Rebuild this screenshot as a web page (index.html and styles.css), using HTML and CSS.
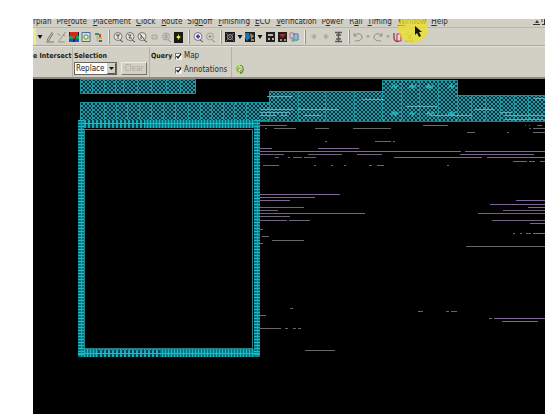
FILE: index.html
```html
<!DOCTYPE html>
<html lang="en">
<head>
<meta charset="utf-8">
<title>Layout Window</title>
<link rel="stylesheet" href="styles.css">
</head>
<body>
<main class="app">
  <header class="chrome">
    <nav class="menubar">
      <a href="#">rplan</a>
      <a href="#">Pre<u>r</u>oute</a>
      <a href="#"><u>P</u>lacement</a>
      <a href="#"><u>C</u>lock</a>
      <a href="#"><u>R</u>oute</a>
      <a href="#">Sig<u>n</u>off</a>
      <a href="#"><u>F</u>inishing</a>
      <a href="#"><u>E</u>CO</a>
      <a href="#"><u>V</u>erification</a>
      <a href="#">P<u>o</u>wer</a>
      <a href="#">R<u>a</u>il</a>
      <a href="#"><u>T</u>iming</a>
      <a href="#"><u>W</u>indow</a>
      <a href="#"><u>H</u>elp</a>
      <svg class="winctl" viewBox="0 0 12 9"><path d="M0 6.500h7M9 6.500h3M11.500 0v6" stroke="#333" fill="none"/><path d="M2 5l2-3 2 3z" fill="#333"/><path d="M9 1v3" stroke="#555"/></svg>
    </nav>
    <div class="toolbar">
      <button class="caret" aria-label="Mode menu"><svg viewBox="0 0 8 12"><path d="M1.500 4h5L4 8z" fill="#111"/></svg></button>
      <button aria-label="Draw"><svg viewBox="0 0 12 12"><path d="M3 9L8 1.500l1 1L4.500 10zM2 11h8" fill="none" stroke="#77766f"/></svg></button>
      <button aria-label="Edit"><svg viewBox="0 0 12 12"><path d="M1.500 2.500l3 2M9.500 1L3 10M2 11h7M7 4l2 1" fill="none" stroke="#96948a"/></svg></button>
      <button aria-label="Layers"><svg viewBox="0 0 12 12"><path d="M1 1h10v10H1z" fill="#222b36"/><path d="M2 1h8v4H2z" fill="#d5261e"/><path d="M1 5h4v3H1zM8 5h3v3H8z" fill="#16a05a"/><path d="M1 8h4v3H1zM7 8h4v3H7z" fill="#1752c9"/><path d="M4 5l2 4 2-4z" fill="#e8332a"/></svg></button>
      <button aria-label="Fit view"><svg viewBox="0 0 12 12"><path d="M2 1.500h8v9H2z" fill="#d5e5bd" stroke="#4969ac"/><circle cx="6" cy="6" r="2.200" fill="#edf6aa" stroke="#51885e"/></svg></button>
      <button aria-label="Hierarchy"><svg viewBox="0 0 12 12"><path d="M3 2h4v2H3z" fill="#26966a"/><path d="M7 3h2v3H7z" fill="#d43d36"/><path d="M6 6h4v2H6z" fill="#c7b62d"/><path d="M7 9h3v2H7z" fill="#286f9b"/><path d="M5 4v6h2" stroke="#aaa" fill="none"/></svg></button>
      <i class="handle"></i>
      <button aria-label="Zoom in"><svg viewBox="0 0 12 12"><circle cx="6" cy="5.500" r="4" fill="#e9e7df" stroke="#76756f"/><path d="M4 4h4M6 4v4M8 9l3 2" stroke="#4b4a47" fill="none"/></svg></button>
      <button aria-label="Zoom out"><svg viewBox="0 0 12 12"><circle cx="6" cy="5.500" r="4" fill="#e9e7df" stroke="#76756f"/><path d="M4 4h3l-2 3h3M8 9l3 2" stroke="#4b4a47" fill="none"/></svg></button>
      <button aria-label="Zoom area"><svg viewBox="0 0 12 12"><circle cx="6" cy="5.500" r="4" fill="#e9e7df" stroke="#76756f"/><path d="M4 3l4 5M8 9l3 2M5 5v3" stroke="#4b4a47" fill="none"/></svg></button>
      <button aria-label="Previous view"><svg viewBox="0 0 12 12"><path d="M4 4h5v4H4z" fill="#c4c2b9" stroke="#aaa89f"/></svg></button>
      <button aria-label="Zoom selection"><svg viewBox="0 0 12 12"><circle cx="6" cy="5.500" r="3.500" fill="#d0cec5" stroke="#a3a198"/><path d="M5 4h2v3H5zM8 9l3 2" stroke="#98968e" fill="none"/></svg></button>
      <button aria-label="Highlight"><svg viewBox="0 0 12 12"><path d="M2 1h9v11H2z" fill="#191915"/><path d="M6.500 3v6M4 6h5" stroke="#8d8b22"/><circle cx="6.500" cy="6" r="1.600" fill="#f1eb52"/></svg></button>
      <i class="handle"></i>
      <button aria-label="Pan"><svg viewBox="0 0 12 12"><circle cx="6" cy="5.500" r="4" fill="#ececf2" stroke="#77767c"/><path d="M6 3.500v4M4 5.500h4" stroke="#3431a5" stroke-width="1.500"/><path d="M8 9l3 2" stroke="#555"/></svg></button>
      <button aria-label="Pan back"><svg viewBox="0 0 12 12"><circle cx="6" cy="5.500" r="3.500" fill="#d0cec5" stroke="#a3a198"/><path d="M6 4v3M4.500 5.500h3M8 9l3 2" stroke="#8b8983"/></svg></button>
      <i class="handle"></i>
      <button aria-label="Cell view"><svg viewBox="0 0 12 12"><path d="M1 1h10v10H1z" fill="#1b1c1b"/><path d="M2 2l8 8M10 2l-8 8" stroke="#696b68"/><circle cx="6" cy="6" r="2.500" fill="none" stroke="#999"/></svg></button>
      <button class="caret" aria-label="Cell view menu"><svg viewBox="0 0 8 12"><path d="M1.500 4h5L4 8z" fill="#111"/></svg></button>
      <button aria-label="Map view"><svg viewBox="0 0 12 12"><path d="M1 1h10v10H1z" fill="#17232c"/><path d="M1 7V2h4l1 5-3 3z" fill="#1d75b0"/><path d="M6 2l4 3-3 3z" fill="#c18334"/><path d="M7 8h3v2H7z" fill="#c18334"/></svg></button>
      <button class="caret" aria-label="Map view menu"><svg viewBox="0 0 8 12"><path d="M1.500 4h5L4 8z" fill="#111"/></svg></button>
      <button aria-label="Pins"><svg viewBox="0 0 12 12"><path d="M2 1h9v10H2z" fill="#20211e"/><path d="M4 3h5v2H4zM4 7h2v2H4zM8 7h2v2H8z" fill="#b8b7a9"/></svg></button>
      <button aria-label="Congestion"><svg viewBox="0 0 12 12"><path d="M2 1h9v10H2z" fill="#231d1b"/><path d="M3 3h7L6.500 7z" fill="#a72c26"/><path d="M4 8h2v2H4zM8 8h2v2H8z" fill="#989388"/></svg></button>
      <button aria-label="Clock tree"><svg viewBox="0 0 12 12"><path d="M2 2h4v3M2 2v5h3" fill="none" stroke="#c46492"/><path d="M6 3h4v6H6z" fill="#d4e8e0" stroke="#2e65c5"/><path d="M4 7v3h3M7 5h2M7 7h2" stroke="#2ca86b" fill="none"/></svg></button>
      <i class="handle"></i>
      <button aria-label="Previous"><svg viewBox="0 0 12 12"><path d="M6 3v5M3.500 5.500h5" stroke="#aeaca3" stroke-width="2"/></svg></button>
      <button aria-label="Next"><svg viewBox="0 0 12 12"><path d="M6 3v5M3.500 5.500h5" stroke="#aeaca3" stroke-width="2"/></svg></button>
      <button aria-label="Align"><svg viewBox="0 0 12 12"><path d="M3 1.500h7M3 10.500h7M4 4h5M4 8h5M6.500 2v8" stroke="#5c5b56" stroke-width="1.500" fill="none"/></svg></button>
      <i class="handle"></i>
      <button aria-label="Undo"><svg viewBox="0 0 12 12"><path d="M2 2v3h3M2 5c3-4 8-2 8 1S7 10 3 10" fill="none" stroke="#908e86"/></svg></button>
      <button class="caret" aria-label="Undo menu"><svg viewBox="0 0 8 12"><path d="M2 4.500h4L4 7z" fill="#999"/></svg></button>
      <button aria-label="Redo"><svg viewBox="0 0 12 12"><path d="M10 2v3H7M10 5C7 1 2 3 2 6s3 4 7 4" fill="none" stroke="#908e86"/></svg></button>
      <button class="caret" aria-label="Redo menu"><svg viewBox="0 0 8 12"><path d="M2 4.500h4L4 7z" fill="#999"/></svg></button>
      <button aria-label="Stop"><svg viewBox="0 0 12 12"><path d="M2 2v5c0 3 3 4 5 3" fill="none" stroke="#8b526d" stroke-width="1.500"/><path d="M5 3h4v7H5z" fill="#ead8dc" stroke="#c2293e"/></svg></button>
      <button aria-label="Clean"><svg viewBox="0 0 12 12"><path d="M3 3l5 5M8 3L4 8M1 10h9" fill="none" stroke="#a59b32"/></svg></button>
    </div>
    <form class="options">
      <section class="group intersect"><strong>e Intersect</strong></section>
      <section class="group selection">
        <label for="mode"><strong>Selection</strong></label>
        <div class="controls">
          <span class="combo"><select id="mode"><option>Replace</option></select><svg viewBox="0 0 9 11"><path d="M.5 10.500h8V.5" fill="none" stroke="#55544f"/><path d="M2 4h5L4.500 7z" fill="#111"/></svg></span>
          <button type="button" class="clear" disabled>Clear</button>
        </div>
      </section>
      <section class="group query">
        <strong>Query</strong>
        <div class="checks">
          <span><input type="checkbox" id="map" checked><svg class="tick" viewBox="0 0 7 7"><path d="M1.500 3l1.500 2 3-4" fill="none" stroke="#222" stroke-width="1.300"/></svg><label for="map">Map</label></span>
          <span><input type="checkbox" id="notes" checked><svg class="tick" viewBox="0 0 7 7"><path d="M1.500 3l1.500 2 3-4" fill="none" stroke="#222" stroke-width="1.300"/></svg><label for="notes">Annotations</label></span>
        </div>
      </section>
      <button type="button" class="help" aria-label="Help"><svg viewBox="0 0 10 12"><path d="M1 1h5l3 3v7H1z" fill="#c9d9a6"/><path d="M5 2c5 0 5 8 0 9z" fill="#557b34"/><circle cx="4.500" cy="6" r="3.500" fill="#9dba5d"/><path d="M3.500 4.500c1-2 4-1 2.500 1L4.500 7v1" fill="none" stroke="#f4f7df"/></svg></button>
    </form>
    <svg class="pointer" viewBox="0 0 30 30"><circle cx="15" cy="15" r="15" fill="#efe31c"/></svg>
    <svg class="arrow" viewBox="0 0 7 12"><path d="M0 0v9l2-2 2 4 2-1-2-4h3z" fill="#16160c"/></svg>
  </header>
  <svg class="canvas" viewBox="33 79 512 335" preserveAspectRatio="xMinYMin slice" role="img" aria-label="Chip layout">
    <defs>
      <pattern id="hatch" width="4" height="4" patternUnits="userSpaceOnUse"><rect width="4" height="4" fill="#07303a"/><path d="M0 0l4 4M4 0L0 4" stroke="#2a9aa6"/></pattern>
      <pattern id="padsH" width="3" height="8" patternUnits="userSpaceOnUse"><rect width="3" height="8" fill="#087987"/><rect width="1" height="8" fill="#14b9c8"/></pattern>
      <pattern id="padsWide" width="4" height="8" patternUnits="userSpaceOnUse"><rect width="4" height="8" fill="#06444d"/><rect width="2" height="8" fill="#14a9b7"/></pattern>
      <pattern id="padsV" width="8" height="3" patternUnits="userSpaceOnUse"><rect width="8" height="3" fill="#087380"/><rect width="8" height="1" fill="#1cc0cd"/></pattern>
    </defs>
    <g fill="url(#hatch)" stroke="#1a959d">
      <path d="M80.500 79.500h115v14h-115zM80.500 102.500h189v18h-189zM269.500 91.500h113v30h-113zM382.500 80.500h75v41h-75zM457.500 95.500h90v26h-90z"/>
      <path fill="none" d="M92.500 80v13M104.500 80v13M115.500 80v13M123.500 80v13M137.500 80v13M151.500 80v13M166.500 80v13M180.500 80v13M92.500 103v17M104.500 103v17M116.500 103v17M127.500 103v17M139.500 103v17M151.500 103v17M163.500 103v17M175.500 103v17M188.500 103v17M200.500 103v17M211.500 103v17M223.500 103v17M234.500 103v17M246.500 103v17M298.500 92v29M325.500 92v29M354.500 92v29M401.500 80v41M419.500 80v41M438.500 80v41M471.500 96v25M485.500 96v25M500.500 96v25M514.500 96v25M528.500 96v25"/>
    </g>
    <path d="M260 121.500h285" stroke="#15818a"/>
    <path d="M391 88l3-3 1 3 3-3M409 88l3-3 1 3 3-3M426 88l3-3 1 3 4-3M448 88l3-3 1 3 3-3M391 115l3-3 1 3 3-3M409 115l3-3 1 3 3-3M426 115l3-3 1 3 4-3M448 115l3-3 1 3 3-3" fill="none" stroke="#20b8b8" stroke-width="1.500"/>
    <path d="M267 96.500h26M362 99.500h22M260 109.500h33M297 109.500h42M260 112.500h30M260 115.500h16M281 115.500h6M303 115.500h19M430 115.500h42M505 115.500h40M407 106.500h30M475 109.500h20M500 112.500h12M505 119.500h38M534 98.500h11" stroke="#62a9b8"/>
    <g shape-rendering="crispEdges">
      <path d="M78 120h182v8H78zM78 349h182v8H78z" fill="url(#padsH)"/>
      <path d="M82 120h62v8H82zM98 350h62v7H98z" fill="url(#padsWide)"/>
      <path d="M78 120h6v237h-6zM254 120h6v237h-6z" fill="url(#padsV)"/>
      <path d="M78 123.500h182M78 353.500h182" stroke="#18bdcc"/>
      <path d="M81.500 120v237M257.500 120v237" stroke="#12a9b7"/>
      <path d="M84.500 129.500h168v219h-168z" fill="none" stroke="#267f88"/>
    </g>
    <g fill="none" shape-rendering="crispEdges">
      <path stroke="#806595" d="M260 151.500h201M465 151.500h80M260 148.500h12M318 148.500h41M260 194.500h80M260 197.500h55M260 200.500h30M394 157.500h88M487 157.500h58M460 154.500h74M494 318.500h51M502 321.500h36M490 204.500h55M516 200.500h29M528 207.500h17M530 223.500h15M533 233.500h12"/>
      <path stroke="#706380" d="M260 125.500h27M423 125.500h25M260 154.500h24M308 154.500h34M357 154.500h25M260 207.500h44M260 210.500h18M260 213.500h105M260 216.500h30M260 220.500h27M289 220.500h21M503 210.500h42M478 213.500h67M492 220.500h53M513 161.500h14M529 161.500h6M540 161.500h5"/>
      <path stroke="#69646d" d="M265 128.500h2M274 128.500h22M315 128.500h14M353 128.500h38M525 125.500h1M529 125.500h1M537 125.500h5M529 128.500h2M533 128.500h12M467 132.500h8M507 132.500h2M533 132.500h12M325 141.500h2M375 141.500h16M393 141.500h2M275 157.500h4M288 157.500h2M293 157.500h9M304 157.500h12M263 165.500h16M314 165.500h2M331 165.500h2M344 165.500h2M369 165.500h3M377 165.500h7M447 165.500h2M260 229.500h3M262 236.500h7M272 240.500h32M260 243.500h3M513 233.500h2M520 233.500h2M526 233.500h5M466 246.500h79M290 308.500h3M418 311.500h5M446 311.500h3M451 311.500h6M260 315.500h6M489 318.500h3M260 328.500h21M285 328.500h3M293 328.500h3M298 328.500h3M305 350.500h30"/>
    </g>
  </svg>
</main>
</body>
</html>
```
FILE: styles.css
```css
* { box-sizing: border-box; }
body {
  margin: 0;
  min-height: 100vh;
  display: flex;
  background: #fff;
  font: 8px/12px "DejaVu Sans Condensed", "DejaVu Sans", sans-serif;
  color: #2d2c29;
}
.app {
  flex: 1;
  margin: 19px 0 0 33px;
  display: flex;
  flex-direction: column;
  min-width: 0;
  background: #000;
  overflow: hidden;
}
.chrome {
  position: relative;
  overflow: hidden;
  background: #d2cfc4;
  border-bottom: 2px solid #8d8b84;
}
.menubar {
  display: flex;
  align-items: flex-end;
  height: 9px;
  gap: 5px;
  line-height: 10px;
  overflow: hidden;
  border-bottom: 1px solid #bab7ad;
}
.menubar a { color: inherit; text-decoration: none; white-space: nowrap; }
.menubar a:nth-child(even) { margin-right: 1px; }
.winctl { width: 12px; height: 9px; margin-left: auto; flex: none; }
.toolbar {
  display: flex;
  align-items: center;
  height: 18px;
  padding-left: 3px;
  border-bottom: 1px solid #aaa79e;
  background: linear-gradient(90deg, #eeea8b 3px, #d2cfc4 3px);
}
button { border: 0; padding: 0; background: none; font: inherit; }
.toolbar button { width: 12px; height: 12px; flex: none; }
.toolbar .caret { width: 8px; }
.toolbar svg, .help svg { display: block; width: 100%; height: 100%; }
.handle {
  width: 8px;
  height: 14px;
  flex: none;
  background: linear-gradient(90deg, transparent 4px, #eeece5 4px 5px, #8f8d85 5px 6px, transparent 6px);
}
.options { display: flex; height: 31px; border-top: 1px solid #e4e2da; }
.group { border-right: 1px solid #b4b1a8; padding: 3px 2px 0 1px; }
.group strong { font-size: 7px; color: #1c1b19; }
.intersect { width: 40px; padding-left: 0; white-space: nowrap; }
.selection { width: 77px; }
.selection label { display: block; }
.controls { display: flex; gap: 4px; }
.combo { display: flex; width: 43px; height: 13px; border: 1px solid #66645f; background: #fff; }
.combo select {
  appearance: none;
  flex: 1;
  min-width: 0;
  border: 0;
  padding: 0 0 0 1px;
  background: #fff;
  color: #222;
  font: inherit;
}
.combo svg { width: 9px; height: 11px; background: #d2cfc4; }
.clear {
  width: 26px;
  height: 13px;
  border: 1px solid;
  border-color: #eeece5 #77756e #77756e #eeece5;
  color: #aaa79e;
}
.query { display: flex; gap: 2px; width: 82px; }
.query strong { flex: none; width: 22px; }
.checks { display: flex; flex-direction: column; gap: 2px; }
.checks span { display: grid; grid-template-columns: 7px auto; align-items: center; gap: 2px; }
.checks input, .checks .tick { grid-area: 1 / 1; width: 7px; height: 7px; }
.checks label { grid-column: 2; }
.checks input {
  appearance: none;
  margin: 0;
  border: 1px solid;
  border-color: #77756f #eeece5 #eeece5 #77756f;
  background: #fff;
}
.tick { position: relative; pointer-events: none; }
.help { width: 10px; height: 12px; margin: 16px 0 0 3px; }
.pointer {
  position: absolute;
  left: 365px;
  top: -6px;
  width: 30px;
  height: 30px;
  opacity: .7;
  pointer-events: none;
}
.arrow { position: absolute; left: 382px; top: 7px; width: 7px; height: 12px; pointer-events: none; }
.canvas { display: block; flex: 1; width: 100%; min-height: 0; background: #000; }
```
